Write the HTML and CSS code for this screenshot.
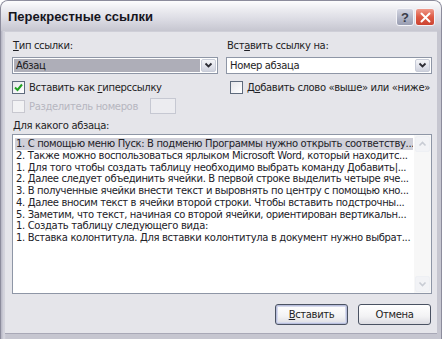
FILE: index.html
```html
<!DOCTYPE html>
<html lang="ru">
<head>
<meta charset="utf-8">
<title>Перекрестные ссылки</title>
<link rel="stylesheet" href="styles.css">
</head>
<body>
<div class="window">
  <div class="titlebar">
    <span class="title">Перекрестные ссылки</span>
    <div class="tbtns">
      <span class="tbtn help">?</span>
      <span class="tbtn close"><svg width="11" height="11" viewBox="0 0 11 11"><path d="M1.5 1.5 L9.5 9.5 M9.5 1.5 L1.5 9.5" stroke="#fff" stroke-width="2" stroke-linecap="round"/></svg></span>
    </div>
  </div>
  <div class="client">
    <div class="cols">
      <div class="col">
        <div class="label"><u>Т</u>ип ссылки:</div>
        <div class="combo">
          <span class="combo-text selected">Абзац</span>
          <span class="combo-btn"><svg width="9" height="7" viewBox="0 0 9 7"><path d="M1.5 1.5 L4.5 4.5 L7.5 1.5" fill="none" stroke="#2c2c34" stroke-width="1.8"/></svg></span>
        </div>
        <div class="check-row">
          <span class="checkbox"><svg width="9" height="9" viewBox="0 0 9 9"><path d="M1 4.5 L3.5 7 L8 1.5" fill="none" stroke="#21a121" stroke-width="2"/></svg></span>
          <span>Вставить как <u>г</u>иперссылку</span>
        </div>
        <div class="check-row disabled">
          <span class="checkbox"></span>
          <span>Разделитель номеров</span>
          <span class="smallbox"></span>
        </div>
      </div>
      <div class="col">
        <div class="label">Вст<u>а</u>вить ссылку на:</div>
        <div class="combo">
          <span class="combo-text">Номер абзаца</span>
          <span class="combo-btn"><svg width="9" height="7" viewBox="0 0 9 7"><path d="M1.5 1.5 L4.5 4.5 L7.5 1.5" fill="none" stroke="#2c2c34" stroke-width="1.8"/></svg></span>
        </div>
        <div class="check-row right">
          <span class="checkbox"></span>
          <span>Д<u>о</u>бавить слово «выше» или «ниже»</span>
        </div>
      </div>
    </div>
    <div class="label list-label"><u>Д</u>ля какого абзаца:</div>
    <div class="listbox">
      <div class="rows">
        <div class="row active">1. С помощью меню Пуск: В подменю Программы нужно открыть соответству...</div>
        <div class="row">2. Также можно воспользоваться ярлыком Microsoft Word, который находитс...</div>
        <div class="row">1. Для того чтобы создать таблицу необходимо выбрать команду Добавить|...</div>
        <div class="row">2. Далее следует объединить ячейки. В первой строке выделить четыре яче...</div>
        <div class="row">3. В полученные ячейки внести текст и выровнять по центру с помощью кно...</div>
        <div class="row">4. Далее вносим текст в ячейки второй строки. Чтобы вставить подстрочны...</div>
        <div class="row">5. Заметим, что текст, начиная со второй ячейки, ориентирован вертикальн...</div>
        <div class="row">1. Создать таблицу следующего вида:</div>
        <div class="row">1. Вставка колонтитула. Для вставки колонтитула в документ нужно выбрат...</div>
      </div>
      <div class="scrollbar">
        <span class="sb-btn"><svg width="9" height="6" viewBox="0 0 9 6"><path d="M1.5 4.5 L4.5 1.5 L7.5 4.5" fill="none" stroke="#c8ccd4" stroke-width="1.6"/></svg></span>
        <span class="sb-track"></span>
        <span class="sb-btn"><svg width="9" height="6" viewBox="0 0 9 6"><path d="M1.5 1.5 L4.5 4.5 L7.5 1.5" fill="none" stroke="#c8ccd4" stroke-width="1.6"/></svg></span>
      </div>
    </div>
    <div class="buttons">
      <span class="btn default"><u>В</u>ставить</span>
      <span class="btn">Отмена</span>
    </div>
  </div>
</div>
</body>
</html>
```
FILE: styles.css
```css
html, body {
  margin: 0;
  padding: 0;
  background: #ffffff;
}
body {
  font-family: "DejaVu Sans", sans-serif;
  font-size: 10px;
  letter-spacing: -0.35px;
  color: #1e1e24;
}
u {
  text-decoration: underline;
  text-underline-offset: 1px;
}
.window {
  width: 442px;
  height: 339px;
  box-sizing: border-box;
  border: 1px solid #8c8c9c;
  border-bottom: none;
  border-radius: 8px 8px 0 0;
  background: linear-gradient(90deg, #b4b4c2 0, #d8d8e0 3px, #c6c6d0 5px);
  display: flex;
  flex-direction: column;
  overflow: hidden;
}
.titlebar {
  height: 30px;
  flex: none;
  display: flex;
  align-items: center;
  justify-content: space-between;
  padding: 0 6px 0 7px;
  background: linear-gradient(180deg, #fdfdfe 0%, #eeeef2 25%, #dcdce4 60%, #c6c6d0 100%);
}
.title {
  font-family: "Liberation Sans", sans-serif;
  font-weight: bold;
  font-size: 13px;
  letter-spacing: 0;
  color: #15151c;
  margin-top: 1px;
}
.tbtns {
  display: flex;
  gap: 1px;
  margin-top: 2px;
}
.tbtn {
  width: 18px;
  height: 18px;
  box-sizing: border-box;
  border: 1px solid #f4f4f8;
  border-radius: 3px;
  display: flex;
  align-items: center;
  justify-content: center;
}
.help {
  background: linear-gradient(180deg, #d4d6e2 0%, #aeb2c4 60%, #9a9eb2 100%);
  font-family: "Liberation Sans", sans-serif;
  font-weight: bold;
  font-size: 13px;
  color: #3a3c48;
  letter-spacing: 0;
}
.close {
  width: 20px;
  background: linear-gradient(180deg, #f0998a 0%, #dd5a44 50%, #cc4432 100%);
}
.client {
  flex: 1;
  margin: 0 4px 6px 4px;
  background: #e5e5ea;
  border-top: 1px solid #cfcfd8;
  border-bottom: 1px solid #a8a8b6;
  padding: 8px 5px 8px 7px;
  display: flex;
  flex-direction: column;
}
.cols {
  display: flex;
  gap: 8px;
}
.col {
  width: 206px;
  display: flex;
  flex-direction: column;
}
.label {
  height: 12px;
  line-height: 12px;
  padding-left: 1px;
}
.combo {
  margin-top: 5px;
  height: 17px;
  box-sizing: border-box;
  border: 1px solid #8e96a6;
  background: #fff;
  display: flex;
  align-items: stretch;
  padding: 1px;
}
.combo-text {
  flex: 1;
  padding-left: 2px;
  line-height: 13px;
}
.combo-text.selected {
  background: #aeaeb8;
  color: #1a1a20;
}
.combo-btn {
  width: 15px;
  margin-left: 1px;
  box-sizing: border-box;
  border: 1px solid #c8ccd8;
  border-radius: 2px;
  background: linear-gradient(180deg, #f4f5f8 0%, #dfe1ea 60%, #cfd2dd 100%);
  display: flex;
  align-items: center;
  justify-content: center;
}
.check-row {
  display: flex;
  align-items: center;
  gap: 4px;
  margin-top: 7px;
  height: 13px;
}
.check-row.right {
  padding-left: 4px;
}
.checkbox {
  width: 13px;
  height: 13px;
  box-sizing: border-box;
  border: 1px solid #5e6a7c;
  background: linear-gradient(135deg, #e6e6ea 0%, #f8f8fa 70%, #ffffff 100%);
  display: flex;
  align-items: center;
  justify-content: center;
  flex: none;
}
.check-row.disabled {
  margin-top: 4px;
  height: 16px;
  color: #b6b6c0;
}
.check-row.disabled .checkbox {
  border-color: #c8c8d0;
  background: #f2f2f4;
}
.smallbox {
  width: 26px;
  height: 16px;
  box-sizing: border-box;
  border: 1px solid #c6c8d2;
  background: #ececf0;
  margin-left: 8px;
}
.list-label {
  margin-top: 6px;
}
.listbox {
  margin-top: 2px;
  height: 160px;
  box-sizing: border-box;
  border: 1px solid #8e96a6;
  background: #ffffff;
  display: flex;
}
.rows {
  flex: 1;
  padding: 3px 1px 0 2px;
  min-width: 0;
}
.row {
  height: 11.75px;
  line-height: 11.75px;
  white-space: nowrap;
  overflow: hidden;
  padding-left: 1px;
  color: #222228;
}
.row.active {
  background: #d0d0d9;
}
.scrollbar {
  width: 17px;
  display: flex;
  flex-direction: column;
  padding: 1px;
  box-sizing: border-box;
  background: #f7f7f7;
}
.sb-btn {
  height: 16px;
  flex: none;
  box-sizing: border-box;
  border: 1px solid #eef0f4;
  border-radius: 2px;
  background: #f2f3f6;
  display: flex;
  align-items: center;
  justify-content: center;
}
.sb-track {
  flex: 1;
}
.buttons {
  margin-top: 10px;
  display: flex;
  justify-content: flex-end;
  gap: 10px;
  padding-right: 1px;
}
.btn {
  width: 73px;
  height: 21px;
  box-sizing: border-box;
  border: 1px solid #4a5262;
  border-radius: 3px;
  background: linear-gradient(180deg, #ffffff 0%, #f2f2f4 60%, #dcdce2 100%);
  display: flex;
  align-items: center;
  justify-content: center;
}
.btn.default {
  box-shadow: inset 0 0 0 1px #b8bedc, inset 0 0 0 2px #d6daec;
}
```
